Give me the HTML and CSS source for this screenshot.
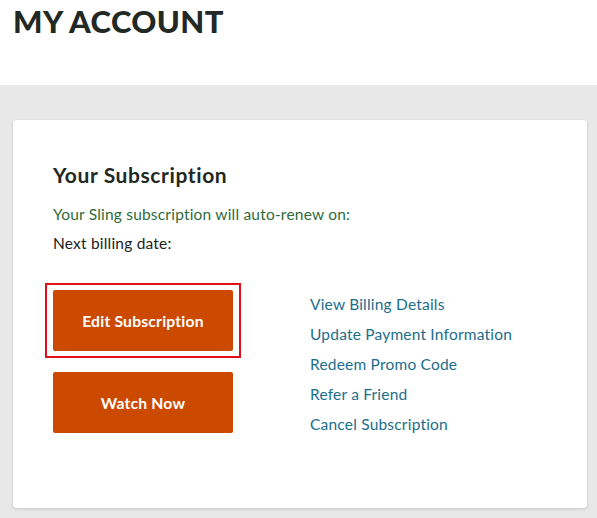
FILE: index.html
```html
<!DOCTYPE html>
<html lang="en">
<head>
    <meta charset="UTF-8">
    <meta name="viewport" content="width=device-width, initial-scale=1.0">
    <title>My Account</title>
    <link rel="stylesheet" href="styles.css">
</head>
<body>

    <header class="page-header">
        <h1>MY ACCOUNT</h1>
    </header>

    <main class="account-area">
        <section class="card">
            <h2>Your Subscription</h2>
            <p class="renew">Your Sling subscription will auto-renew on:</p>
            <p class="billing">Next billing date:</p>

            <div class="actions">
                <div class="buttons">
                    <div class="highlight">
                        <a class="btn" href="#">Edit Subscription</a>
                    </div>
                    <a class="btn" href="#">Watch Now</a>
                </div>

                <ul class="links">
                    <li><a href="#">View Billing Details</a></li>
                    <li><a href="#">Update Payment Information</a></li>
                    <li><a href="#">Redeem Promo Code</a></li>
                    <li><a href="#">Refer a Friend</a></li>
                    <li><a href="#">Cancel Subscription</a></li>
                </ul>
            </div>
        </section>
    </main>

</body>
</html>
```

FILE: styles.css
```css
* {
    margin: 0;
    padding: 0;
    box-sizing: border-box;
}

body {
    font-family: Lato, "Open Sans", Arial, sans-serif;
    background-color: #fff;
    color: #222;
    height: 518px;
    display: flex;
    flex-direction: column;
}

.page-header {
    height: 85px;
    padding: 3px 13px 0;
}

.page-header h1 {
    font-size: 31px;
    font-weight: 900;
    letter-spacing: 0.4px;
    color: #222823;
    line-height: 36px;
}

.account-area {
    flex: 1;
    background-color: #e8e8e8;
    padding: 35px 10px 10px 13px;
}

.card {
    background-color: #fff;
    border-radius: 4px;
    box-shadow: 0 1px 3px rgba(0, 0, 0, 0.15);
    height: 388px;
    padding: 42px 40px 0;
}

.card h2 {
    font-size: 21px;
    font-weight: 700;
    letter-spacing: 0.6px;
    color: #222823;
    line-height: 26px;
    margin-bottom: 16px;
}

.renew {
    font-size: 15.5px;
    letter-spacing: 0.2px;
    color: #2f6b3c;
    line-height: 20px;
    margin-bottom: 9px;
}

.billing {
    font-size: 15.5px;
    letter-spacing: 0.2px;
    color: #222;
    line-height: 20px;
}

.actions {
    display: flex;
    margin-top: 37px;
}

.buttons {
    display: flex;
    flex-direction: column;
    gap: 14px;
    width: 180px;
}

.highlight {
    margin: -7px -8px 0;
    padding: 5px 6px;
    border: 2px solid #e3101a;
}

.btn {
    display: flex;
    align-items: center;
    justify-content: center;
    height: 61px;
    background-color: #cc4a00;
    border-radius: 2px;
    color: #fff;
    font-size: 15.7px;
    font-weight: 700;
    letter-spacing: 0.2px;
    text-decoration: none;
}

.links {
    list-style: none;
    margin-left: 77px;
    margin-top: -1px;
}

.links li {
    line-height: 30px;
}

.links a {
    font-size: 15.5px;
    letter-spacing: 0.2px;
    color: #1b6e8c;
    text-decoration: none;
}
```
